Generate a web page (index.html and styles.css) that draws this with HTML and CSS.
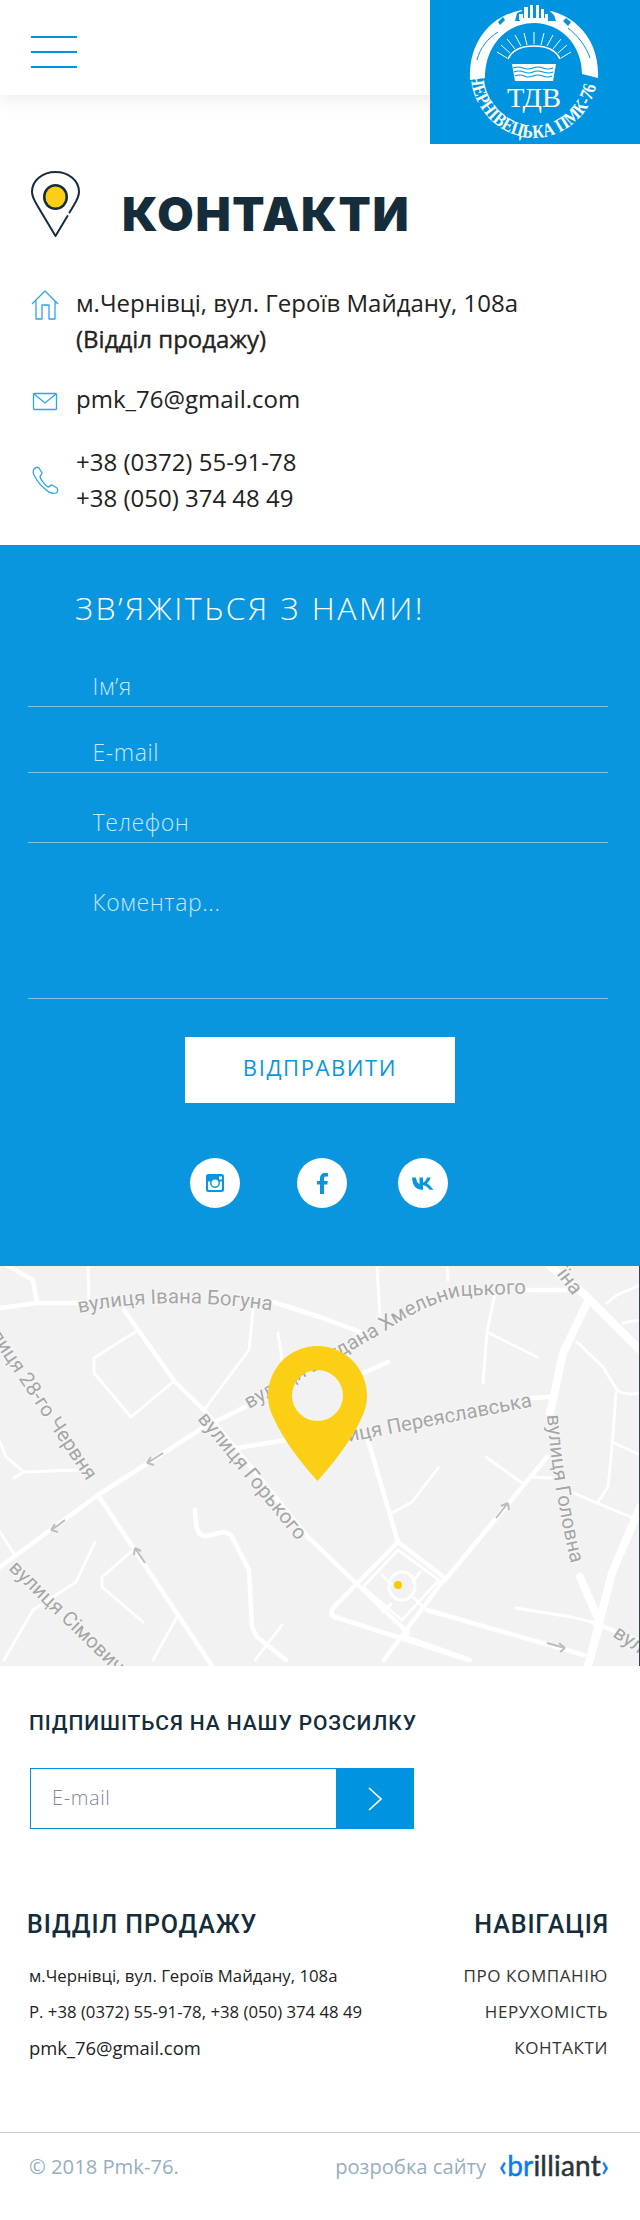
FILE: index.html
```html
<!DOCTYPE html>
<html lang="uk">
<head>
<meta charset="utf-8">
<title>Контакти</title>
<link rel="stylesheet" href="styles.css">
</head>
<body>
<header class="topbar">
  <div class="burger"><span></span><span></span><span></span></div>
  <a class="logo" href="#">
    <svg viewBox="0 0 210 144" width="210" height="144">
      <path fill="#fff" d="M40,80C38,36 68,9 104,9C140,9 170,36 168,78L152,74C152,44 130,23 104,23C78,23 55,44 55,78Z"/>
      <path fill="none" stroke="#0094e0" stroke-width="1" d="M47,60C50,48 58,38 68,32M138,28C148,36 156,46 160,58"/>
      <path fill="#0094e0" d="M68,22l5-5 2,3-5,5zM136,18l5,4-3,4-5-5zM92,5h27v5l5,5 2,6H85l2-8 5-2z"/>
      <path fill="#fff" d="M94,7h4v13h-4zM100,5h3v15h-3zM106,5h3v15h-3zM111,9h3v11h-3zM115,14h3v6h-3zM89,14h4v6h-4zM90,18h28v5H90z"/>
      <g stroke="#fff" stroke-width="1" fill="none">
        <path stroke-width="1.600" d="M78,59C82,50 92,46 104,46C116,46 126,50 130,59"/>
        <path d="M104,44V32M97,45L94,33M91,46L85,35M85,49L77,39M80,53L71,45M77,58L67,52M111,45L114,33M117,46L123,35M123,49L131,39M128,53L137,45M131,58L141,52"/>
      </g>
      <path fill="#fff" d="M82,64h44l-3,17H85z"/>
      <g stroke="#0094e0" stroke-width="1.200" fill="none">
        <path d="M83,68q5,-2 10,0t10,0t10,0t10,0M84,72q5,-2 10,0t9,0t10,0t10,0M85,76q5,-2 9,0t9,0t10,0t9,0"/>
      </g>
      <text class="logo-tdv" x="104" y="107" text-anchor="middle" textLength="54" lengthAdjust="spacingAndGlyphs">ТДВ</text>
      <path id="logoArc" fill="none" d="M41,75C41,108 70,138 104,138C138,138 167,108 167,75"/>
      <text class="logo-ring"><textPath href="#logoArc" textLength="186" lengthAdjust="spacingAndGlyphs">ЧЕРНІВЕЦЬКА ПМК-76</textPath></text>
    </svg>
  </a>
</header>

<main>
  <section class="title-row">
    <svg class="title-pin" viewBox="0 0 49 66" width="49" height="66">
      <path fill="none" stroke="#152c3b" stroke-width="2" stroke-linecap="round" d="M24.500,65L6,34C3,29 1,25 1,21C1,9 12,1 24.500,1C37,1 48,9 48,21C48,25 46,29 43,34L38.500,41.500M36.500,45L24.500,65"/>
      <ellipse cx="24.500" cy="26" rx="12.500" ry="13" fill="#152c3b"/>
      <ellipse cx="24.500" cy="26" rx="10" ry="10.500" fill="#fbcf16"/>
    </svg>
    <h1 class="page-title">КОНТАКТИ</h1>
  </section>

  <section class="contacts">
    <div class="contact">
      <svg class="ci" viewBox="0 0 28 30" width="28" height="30"><path fill="none" stroke="#2ea5e6" stroke-width="1.300" stroke-linejoin="round" d="M1,14L14,1L27,14M5,11V29H11V15H18V29H24V11"/></svg>
      <p>м.Чернівці, вул. Героїв Майдану, 108а<br><span class="strong">(Відділ продажу)</span></p>
    </div>
    <div class="contact mail">
      <svg class="ci" viewBox="0 0 28 30" width="28" height="30"><rect x="2.500" y="7.500" width="23" height="16" rx="1" fill="none" stroke="#2ea5e6" stroke-width="1.300"/><path fill="none" stroke="#2ea5e6" stroke-width="1.300" d="M3,8L14,17L25,8"/></svg>
      <p>pmk_76@gmail.com</p>
    </div>
    <div class="contact phone">
      <svg class="ci" viewBox="0 0 28 30" width="28" height="30"><path fill="none" stroke="#2ea5e6" stroke-width="1.300" stroke-linejoin="round" d="M3,4C5,2 7,2 8,3L11,8C11,10 9,10 9,12C10,15 14,20 17,22C19,22 19,20 21,20L26,23C27,25 27,27 25,28C22,29 18,28 13,23C8,19 5,14 3,10C2,8 2,6 3,4Z"/></svg>
      <p>+38 (0372) 55-91-78<br>+38 (050) 374 48 49</p>
    </div>
  </section>

  <section class="feedback">
    <h2 class="feedback-title">ЗВ’ЯЖІТЬСЯ З НАМИ!</h2>
    <form class="form">
      <input class="field f1" type="text" placeholder="Ім’я">
      <input class="field f2" type="text" placeholder="E-mail">
      <input class="field f3" type="text" placeholder="Телефон">
      <textarea class="field area" placeholder="Коментар..."></textarea>
      <button class="send" type="button">ВІДПРАВИТИ</button>
    </form>
    <div class="socials">
      <a class="soc" href="#"><svg viewBox="0 0 18 18" width="18" height="18"><path fill="#0a96df" fill-rule="evenodd" d="M2.500,0H15.500A2.500,2.500 0 0 1 18,2.500V15.500A2.500,2.500 0 0 1 15.500,18H2.500A2.500,2.500 0 0 1 0,15.500V2.500A2.500,2.500 0 0 1 2.500,0ZM13,2.500V5.500H16V2.500ZM2,7.500V15A1,1 0 0 0 3,16H15A1,1 0 0 0 16,15V7.500H13.800A5,5 0 1 1 4.200,7.500ZM9,5.500A3.500,3.500 0 1 0 9,12.500A3.500,3.500 0 1 0 9,5.500Z"/></svg></a>
      <a class="soc" href="#"><svg viewBox="0 0 11 21" width="11" height="21"><path fill="#0a96df" d="M3,21V11.500H0V8H3V5.500C3,2 5,0 8,0C9.300,0 10.400,.1 11,.2V3.500H9C7.500,3.500 7,4.300 7,5.500V8H10.800L10.300,11.500H7V21Z"/></svg></a>
      <a class="soc" href="#"><svg viewBox="0 0 22 13" width="22" height="13"><path fill="#0a96df" d="M0,0.500H3.800C4.500,4 6,6.500 7.500,7.200V0.500H11V5.500C12.500,5.300 14,3.500 15,0.500H18.600C18,3.500 16,5.500 14.800,6.300C16,7 18.500,9 21.500,12.800H17.600C16.500,10.800 14,8.500 11,8.200V12.800H10C4,12.800 .5,8.500 0,0.500Z"/></svg></a>
    </div>
  </section>

  <section class="map">
    <svg class="map-art" viewBox="0 0 640 400" width="640" height="400">
      <g class="rd r5">
        <path d="M0,42L37,37L78,37M273,36L320,51L363,67M8,0L33,14L37,37"/>
        <path d="M124,44L175,116L204,144L308,271L408,367M406,371L470,394"/>
        <path d="M0,301L98,229L204,161L245,141M526,24L580,24"/>
        <path d="M237,182L286,174M363,107L388,96M531,132L549,131"/>
        <path d="M98,229L212,400M367,171L398,276M445,314L547,191M427,344L584,389"/>
        <path d="M592,356L640,375M398,276L333,342Q329,349 335,351L469,394M398,276L445,312L384,394"/>
        <path d="M195,244L196,257Q197,270 206,270L224,266L231,269L249,304L252,361L257,371L286,394"/>
      </g>
      <g class="rd r3">
        <path d="M88,0L89,37M135,66L94,92V107L131,151L173,116M253,44L249,84L204,144M278,67L282,94"/>
        <path d="M377,0L380,51M447,0L448,14M495,27L487,66L483,117M487,66L537,91"/>
        <path d="M577,76L603,101L617,124Q625,130 640,127M616,127L612,181L608,221L598,236M612,176L640,189"/>
        <path d="M607,37L617,29L640,19M623,57L640,54M486,191L522,217M531,211L551,212M571,226L633,252"/>
        <path d="M439,201L412,236L392,247M0,176L6,191L24,206L14,212M24,206L78,204M0,266L16,291"/>
        <path d="M95,276L76,316L33,344L4,394M133,284L102,311V321L143,356M178,349L153,394M282,359L255,394"/>
        <path d="M398,284L439,314L402,354L363,321Z M516,342L571,351L592,356"/>
        <path d="M382,309L391,318M420,306L413,316M391,338L383,346M414,332L424,342"/>
      </g>
      <ellipse cx="402" cy="320" rx="13" ry="14" class="ring"/>
      <g class="rd r8">
        <path d="M550,0L583,27L640,84"/>
        <path d="M587,37L563,87L553,134L550,147"/>
        <path d="M580,311L600,357L588,400M640,241L612,307L588,400"/>
      </g>
      <circle cx="398" cy="319" r="4" fill="#fcc900"/>
      <g class="arrows">
        <path d="M65,254L53,263M51,264L58,266M51,264L55,258"/>
        <path d="M163,187L149,196M147,197L154,199M147,197L151,191"/>
        <path d="M508,237L496,252M508,237L501,240M508,237L509,244"/>
        <path d="M145,297L135,282M135,282L134,289M135,282L141,285"/>
        <path d="M547,377L565,382M565,382L559,377M565,382L560,386"/>
      </g>
      <defs>
        <path id="s1" d="M79,47Q170,28 280,46"/>
        <path id="s2" d="M249,143L384,66Q425,38 462,30L540,27"/>
        <path id="s3" d="M317,182L540,139"/>
        <path id="s4" d="M197,153L318,300"/>
        <path id="s5" d="M-22,52L110,250"/>
        <path id="s6" d="M8,303L150,440"/>
        <path id="s7" d="M547,149Q553,230 578,325"/>
        <path id="s8" d="M544,-8L573,30"/>
        <path id="s9" d="M612,370L660,402"/>
      </defs>
      <g class="street">
        <text><textPath href="#s1">вулиця Івана Богуна</textPath></text>
        <text><textPath href="#s2">вулиця Богдана Хмельницького</textPath></text>
        <text><textPath href="#s3">вулиця Переяславська</textPath></text>
        <text><textPath href="#s4">вулиця Горького</textPath></text>
        <text><textPath href="#s5">вулиця 28-го Червня</textPath></text>
        <text><textPath href="#s6">вулиця Сімовича</textPath></text>
        <text><textPath href="#s7">вулиця Головна</textPath></text>
        <text text-anchor="end"><textPath href="#s8" startOffset="100%">їна</textPath></text>
        <text><textPath href="#s9">вул</textPath></text>
      </g>
    </svg>
    <svg class="map-pin" viewBox="0 0 99 135" width="99" height="135"><path fill="#fbcf16" fill-rule="evenodd" d="M49.500,0C77,0 99,22 99,50C99,58 97,65 93,73C82,96 68,114 49.500,135C31,114 17,96 6,73C2,65 0,58 0,50C0,22 22,0 49.500,0ZM49.500,24A25.500,25.500 0 1 0 49.500,75A25.500,25.500 0 1 0 49.500,24Z"/></svg>
  </section>

  <section class="subscribe">
    <h3 class="subscribe-title">ПІДПИШІТЬСЯ НА НАШУ РОЗСИЛКУ</h3>
    <form class="sub-form">
      <input class="sub-input" type="text" placeholder="E-mail">
      <button class="sub-btn" type="button"><svg viewBox="0 0 14 24" width="14" height="24"><path fill="none" stroke="#fff" stroke-width="1.600" d="M1,1L13,12L1,23"/></svg></button>
    </form>
  </section>

  <footer class="foot">
    <div class="foot-cols">
      <div class="foot-left">
        <h4 class="foot-h">ВІДДІЛ ПРОДАЖУ</h4>
        <p class="fl">м.Чернівці, вул. Героїв Майдану, 108а</p>
        <p class="fl">Р. +38 (0372) 55-91-78, +38 (050) 374 48 49</p>
        <p class="fl big">pmk_76@gmail.com</p>
      </div>
      <nav class="foot-right">
        <h4 class="foot-h">НАВІГАЦІЯ</h4>
        <a class="nl" href="#">ПРО КОМПАНІЮ</a>
        <a class="nl" href="#">НЕРУХОМІСТЬ</a>
        <a class="nl" href="#">КОНТАКТИ</a>
      </nav>
    </div>
    <div class="foot-bottom">
      <span class="copy">© 2018 Pmk-76.</span>
      <span class="dev">розробка сайту
        <span class="brand"><span class="bl">‹br</span><span class="bd">illiant</span><span class="bl">›</span></span>
      </span>
    </div>
  </footer>
</main>
</body>
</html>
```

FILE: styles.css
```css
* { box-sizing: border-box; }
html, body { margin: 0; padding: 0; }
body { width: 640px; height: 2220px; overflow: hidden; background: #fff; font-family: "Open Sans", sans-serif; color: #222; }
h1, h2, h3, h4, p { margin: 0; font-weight: 400; }
a { color: inherit; text-decoration: none; }
input, textarea, button { font-family: inherit; border-radius: 0; outline: none; }

.topbar { position: relative; height: 95px; background: #fff; box-shadow: 0 6px 16px rgba(40, 50, 50, .08); padding: 36px 0 0 31px; }
.burger { width: 46px; display: flex; flex-direction: column; gap: 13px; }
.burger span { height: 2px; background: #0094e0; }
.logo { position: absolute; top: 0; left: 430px; width: 210px; height: 144px; background: #0094e0; display: block; }
.logo svg { display: block; }
.logo-tdv { font-family: "Liberation Serif", serif; font-size: 27px; fill: #fff; }
.logo-ring { font-family: "Liberation Serif", serif; font-weight: 700; font-size: 19px; fill: #fff; }

.title-row { display: flex; align-items: flex-start; padding: 76px 0 0 31px; height: 190px; }
.title-pin { flex: none; }
.page-title { margin: 15px 0 0 42px; font-family: Inter, sans-serif; font-weight: 900; font-size: 47px; line-height: 56px; color: #152c3b; letter-spacing: 1.700px; }

.contacts { padding: 0 0 29px 31px; display: flex; flex-direction: column; gap: 24px; }
.contact { display: flex; gap: 17px; font-size: 24px; line-height: 36px; }
.contact .ci { flex: none; margin-top: 5px; }
.contact.phone { align-items: center; margin-top: 3px; }
.contact.phone .ci { margin-top: 0; }
.strong { -webkit-text-stroke: .35px currentColor; }

.feedback { background: #0a96df; height: 721px; padding-top: 41px; }
.feedback-title { margin-left: 75px; font-size: 32px; font-weight: 300; color: #fff; line-height: 44px; letter-spacing: 2.500px; }
.form { margin: 31px 32px 0 28px; display: flex; flex-direction: column; }
.field { display: block; width: 100%; background: transparent; border: 0; border-bottom: 1px solid rgba(255, 255, 255, .45); padding: 0 0 0 64.500px; font-size: 23px; font-weight: 300; color: #fff; letter-spacing: .6px; }
.field::placeholder { color: rgba(255, 255, 255, .78); opacity: 1; }
.f1 { height: 46px; padding-top: 4px; }
.f2 { height: 66px; padding-top: 24px; }
.f3 { height: 70px; padding-top: 28px; }
.area { height: 156px; padding-top: 43px; resize: none; overflow: hidden; line-height: 32px; }
.send { display: block; align-self: flex-start; margin: 38px 0 0 157px; width: 270px; height: 66px; padding: 0 0 7px; background: #fff; border: 0; color: #0a96df; font-size: 22px; letter-spacing: 1.600px; }
.socials { display: flex; margin: 55px 0 0 190px; gap: 57px; }
.socials .soc:last-child { margin-left: -6px; }
.soc { width: 50px; height: 50px; border-radius: 50%; background: #fff; display: flex; align-items: center; justify-content: center; }

.map { position: relative; height: 400px; background: #f2f2f2; overflow: hidden; border-right: 1px solid #2f4650; }
.map-art { display: block; }
.rd { fill: none; stroke: #fff; stroke-linejoin: round; stroke-linecap: round; }
.r5 { stroke-width: 4.500px; }
.r3 { stroke-width: 2.800px; }
.r8 { stroke-width: 8px; }
.ring { fill: none; stroke: #fff; stroke-width: 3px; }
.arrows path { fill: none; stroke: #bdbdbd; stroke-width: 2px; }
.street { font-family: Roboto, sans-serif; font-size: 20.300px; fill: #a6a6a6; stroke: #f6f6f6; stroke-width: 2.500px; paint-order: stroke; }
.map-pin { position: absolute; left: 268px; top: 80px; }

.subscribe { padding: 43px 0 0 29px; }
.subscribe-title { font-family: Roboto, sans-serif; font-weight: 500; font-size: 21px; line-height: 28px; letter-spacing: .900px; color: #152c3b; }
.sub-form { display: flex; margin: 31px 0 0 1px; width: 384px; height: 61px; }
.sub-input { width: 306px; height: 61px; border: 1px solid #0094e0; border-right: 0; padding: 0 0 3px 21px; font-size: 20px; font-weight: 300; letter-spacing: .6px; background: #fff; }
.sub-input::placeholder { color: #7f869c; opacity: 1; }
.sub-btn { width: 78px; height: 61px; border: 0; background: #0094e0; display: flex; align-items: center; justify-content: center; padding: 0; }

.foot-cols { display: flex; justify-content: space-between; padding: 80px 31px 0 27px; height: 303px; }
.foot-h { font-family: Roboto, sans-serif; font-weight: 500; font-size: 25px; line-height: 32px; letter-spacing: .900px; color: #152c3b; margin-bottom: 17px; }
.fl { font-size: 16.750px; line-height: 36px; padding-left: 2px; color: #222; }
.big { font-size: 18.400px; }
.foot-right { display: flex; flex-direction: column; align-items: flex-end; }
.nl { font-size: 17px; line-height: 36px; font-weight: 400; color: #333; letter-spacing: .6px; margin-right: 1px; }
.foot-bottom { border-top: 1px solid #ccc; display: flex; justify-content: space-between; align-items: center; height: 88px; padding: 0 31px 22px 29px; color: #97aebd; font-size: 20.200px; }
.dev { display: flex; align-items: center; gap: 13px; }
.brand { font-family: Lato, sans-serif; font-size: 28px; font-weight: 400; letter-spacing: .2px; line-height: 30px; margin-top: -2px; -webkit-text-stroke: .5px currentColor; }
.bl { color: #0a7ee8; }
.bd { color: #2c3338; }
```
